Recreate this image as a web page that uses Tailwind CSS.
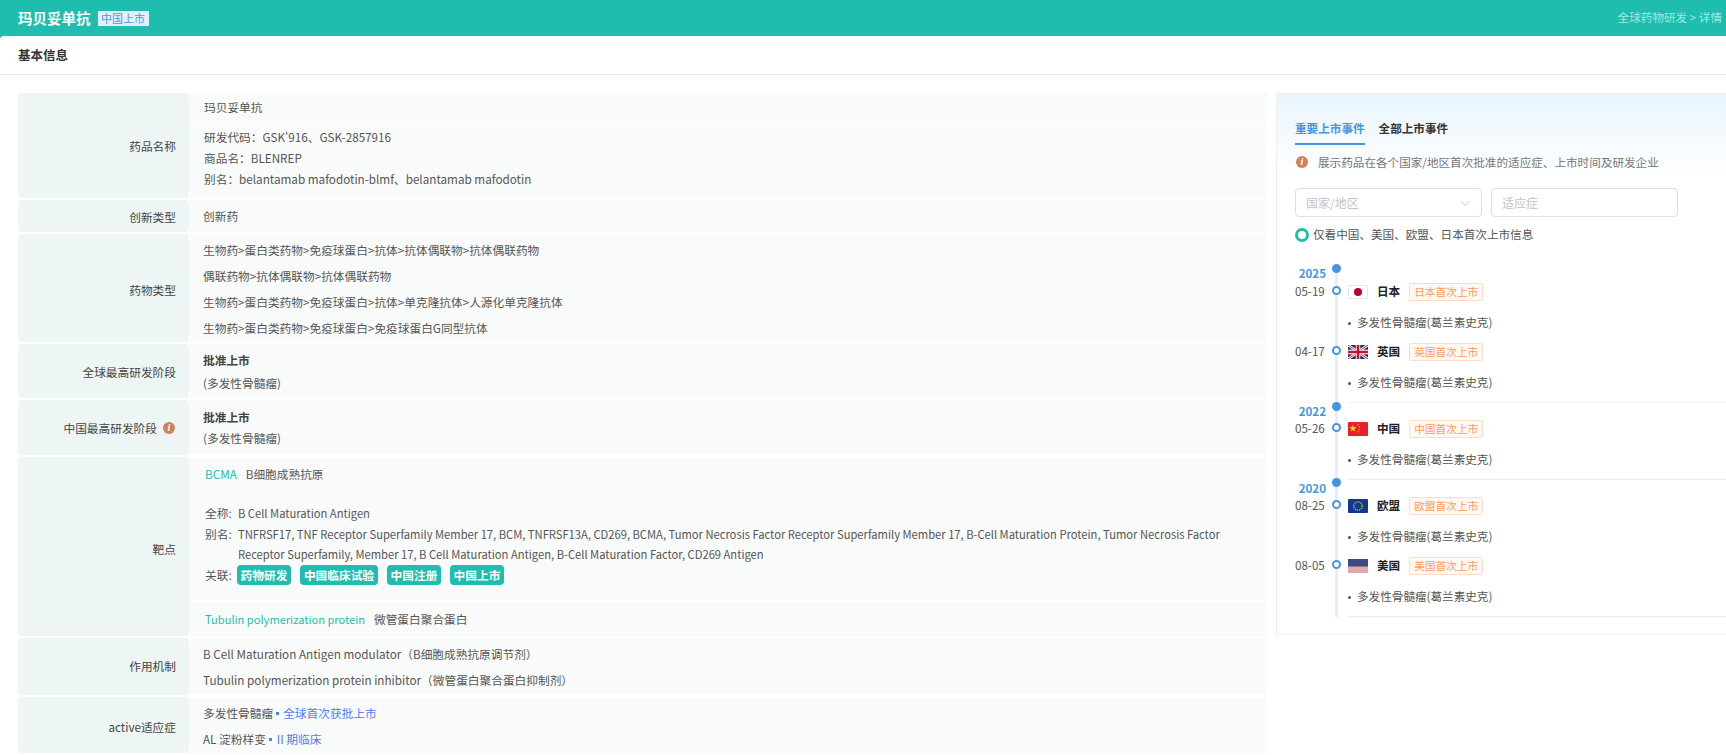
<!DOCTYPE html>
<html lang="zh-CN">
<head>
    <meta charset="UTF-8">
    <title>玛贝妥单抗</title>
    <script src="https://cdn.jsdelivr.net/npm/@tailwindcss/browser@4"></script>
</head>
<body class="h-[755px] overflow-hidden bg-[#1fbdae] font-['Noto_Sans_CJK_SC',sans-serif] text-[11.6px] text-[#555]">
    <!-- Header -->
    <div class="h-9 flex items-center justify-between pl-[18px] pr-1">
        <div class="flex items-center gap-[7px]">
            <span class="text-[14.5px] font-bold text-white">玛贝妥单抗</span>
            <span class="h-[15px] w-[51px] flex items-center justify-center bg-[#e4f0fe] text-[11px] leading-none text-[#4a97ee]">中国上市</span>
        </div>
        <span class="text-[#a3e8e0]">全球药物研发 &gt; 详情</span>
    </div>

    <div class="h-[719px] bg-white rounded-tl-[4px]">
        <div class="h-[39px] flex items-center pl-[18px] border-b border-[#e8e8e8] text-[12.5px] font-bold text-[#333]">基本信息</div>

        <div class="flex items-start pt-[18px] pl-[18px]">
            <!-- Basic info table -->
            <div class="w-[1249px] shrink-0 flex flex-col gap-[2px] text-[11.7px]">
                <div class="flex gap-[1px]">
                    <div class="w-[171px] h-[105px] shrink-0 flex items-center justify-end pr-[13px] pt-[1px] bg-[#eef6f5] rounded text-[#444]">药品名称</div>
                    <div class="flex-1 flex flex-col gap-[1px]">
                        <div class="h-[28px] pl-[14px] bg-[#f9fbfb] leading-[28px]">玛贝妥单抗</div>
                        <div class="h-[76px] pl-[14px] pt-[4px] bg-[#f9fbfb] leading-[21px]">
                            <div>研发代码：GSK'916、GSK-2857916</div>
                            <div>商品名：BLENREP</div>
                            <div>别名：belantamab mafodotin-blmf、belantamab mafodotin</div>
                        </div>
                    </div>
                </div>

                <div class="flex gap-[1px]">
                    <div class="w-[171px] h-[32px] shrink-0 flex items-center justify-end pr-[13px] pt-[1px] bg-[#eef6f5] rounded text-[#444]">创新类型</div>
                    <div class="flex-1 pl-[13px] pt-[3px] bg-[#f9fbfb] leading-[26px]">创新药</div>
                </div>

                <div class="flex gap-[1px]">
                    <div class="w-[171px] h-[108px] shrink-0 flex items-center justify-end pr-[13px] pt-[3px] bg-[#eef6f5] rounded text-[#444]">药物类型</div>
                    <div class="flex-1 pl-[13px] pt-[3px] bg-[#f9fbfb] leading-[26px]">
                        <div>生物药&gt;蛋白类药物&gt;免疫球蛋白&gt;抗体&gt;抗体偶联物&gt;抗体偶联药物</div>
                        <div>偶联药物&gt;抗体偶联物&gt;抗体偶联药物</div>
                        <div>生物药&gt;蛋白类药物&gt;免疫球蛋白&gt;抗体&gt;单克隆抗体&gt;人源化单克隆抗体</div>
                        <div>生物药&gt;蛋白类药物&gt;免疫球蛋白&gt;免疫球蛋白G同型抗体</div>
                    </div>
                </div>

                <div class="flex gap-[1px]">
                    <div class="w-[171px] h-[54px] shrink-0 flex items-center justify-end pr-[13px] pt-[1px] bg-[#eef6f5] rounded text-[#444]">全球最高研发阶段</div>
                    <div class="flex-1 pl-[13px] pt-[5px] bg-[#f9fbfb] leading-[22.500px]">
                        <div class="font-bold text-[#444]">批准上市</div>
                        <div>(多发性骨髓瘤)</div>
                    </div>
                </div>

                <div class="flex gap-[1px]">
                    <div class="w-[171px] h-[55px] shrink-0 flex items-center justify-end gap-[6px] pr-[14px] bg-[#eef6f5] rounded text-[#444]">
                        中国最高研发阶段
                        <span class="w-3 h-3 flex items-center justify-center rounded-full bg-[#cf8257] font-['Liberation_Serif'] text-[10px] font-bold italic leading-none text-white">i</span>
                    </div>
                    <div class="flex-1 pl-[13px] pt-[6px] bg-[#f9fbfb] leading-[21px]">
                        <div class="font-bold text-[#444]">批准上市</div>
                        <div>(多发性骨髓瘤)</div>
                    </div>
                </div>

                <div class="flex gap-[1px]">
                    <div class="w-[171px] h-[179px] shrink-0 flex items-center justify-end pr-[13px] pt-[5px] bg-[#eef6f5] rounded text-[#444]">靶点</div>
                    <div class="flex-1 flex flex-col gap-[1px]">
                        <div class="h-[34px] pl-[15px] pt-[4px] bg-[#f9fbfb] leading-[26px]">
                            <span class="text-[#1fbdae] mr-[9px]">BCMA</span>B细胞成熟抗原
                        </div>
                        <div class="h-[108px] pl-[15px] pt-[11px] bg-[#f9fbfb] leading-[20.500px]">
                            <div class="flex"><span class="w-[33px] shrink-0">全称:</span><span class="text-[11.200px]">B Cell Maturation Antigen</span></div>
                            <div class="flex"><span class="w-[33px] shrink-0">别名:</span><span class="w-[1010px] text-[11.200px]">TNFRSF17, TNF Receptor Superfamily Member 17, BCM, TNFRSF13A, CD269, BCMA, Tumor Necrosis Factor Receptor Superfamily Member 17, B-Cell Maturation Protein, Tumor Necrosis Factor Receptor Superfamily, Member 17, B Cell Maturation Antigen, B-Cell Maturation Factor, CD269 Antigen</span></div>
                            <div class="flex items-center">
                                <span class="w-[32px] shrink-0">关联:</span>
                                <div class="flex gap-[9px] font-bold text-white">
                                    <span class="w-[54px] h-5 flex items-center justify-center rounded bg-[#1fbdae]">药物研发</span>
                                    <span class="w-[78px] h-5 flex items-center justify-center rounded bg-[#1fbdae]">中国临床试验</span>
                                    <span class="w-[54px] h-5 flex items-center justify-center rounded bg-[#1fbdae]">中国注册</span>
                                    <span class="w-[54px] h-5 flex items-center justify-center rounded bg-[#1fbdae]">中国上市</span>
                                </div>
                            </div>
                        </div>
                        <div class="h-[35px] pl-[15px] pt-[5px] bg-[#f9fbfb] leading-[26px]">
                            <span class="text-[11.100px] text-[#1fbdae] mr-[9px]">Tubulin polymerization protein</span>微管蛋白聚合蛋白
                        </div>
                    </div>
                </div>

                <div class="flex gap-[1px]">
                    <div class="w-[171px] h-[57px] shrink-0 flex items-center justify-end pr-[13px] pb-[1px] bg-[#eef6f5] rounded text-[#444]">作用机制</div>
                    <div class="flex-1 pl-[13px] pt-[3px] bg-[#f9fbfb] leading-[26px]">
                        <div>B Cell Maturation Antigen modulator（B细胞成熟抗原调节剂）</div>
                        <div>Tubulin polymerization protein inhibitor（微管蛋白聚合蛋白抑制剂）</div>
                    </div>
                </div>

                <div class="flex gap-[1px]">
                    <div class="w-[171px] h-[56px] shrink-0 flex items-center justify-end pr-[13px] pt-[3px] bg-[#eef6f5] rounded text-[#444]">active适应症</div>
                    <div class="flex-1 pl-[13px] pt-[3px] bg-[#f9fbfb] leading-[26px]">
                        <div class="flex items-center">多发性骨髓瘤<span class="w-[3px] h-[3px] mx-[3px] bg-[#4d7cfe]"></span><span class="text-[#4d7cfe] ml-[1px]">全球首次获批上市</span></div>
                        <div class="flex items-center">AL 淀粉样变<span class="w-[3px] h-[3px] mx-[3px] bg-[#4d7cfe]"></span><span class="text-[#4d7cfe] ml-[2px]">II 期临床</span></div>
                    </div>
                </div>
            </div>

            <!-- Market events panel -->
            <div class="w-[460px] h-[542px] shrink-0 ml-[9px] pl-[18px] pt-[26px] border border-[#eeeeee] bg-gradient-to-b from-[#e9f5fe] to-white to-[16%]">
                <div class="flex gap-[14px] font-bold">
                    <span class="h-[25px] border-b-2 border-[#4596e0] text-[#4596e0]">重要上市事件</span>
                    <span class="text-[#333]">全部上市事件</span>
                </div>
                <div class="flex items-center gap-[10px] mt-[7px] ml-[1px] leading-[20px] text-[#777]">
                    <span class="w-3 h-3 flex items-center justify-center rounded-full bg-[#cf8257] font-['Liberation_Serif'] text-[10px] font-bold italic leading-none text-white">i</span>
                    展示药品在各个国家/地区首次批准的适应症、上市时间及研发企业
                </div>
                <div class="flex gap-[9px] mt-[16px]">
                    <div class="w-[187px] h-[29px] flex items-center justify-between pl-[10px] pr-[10px] bg-white rounded border border-[#dcdfe6] text-xs text-[#c0c4cc]">
                        国家/地区
                        <svg class="w-3 h-3" fill="none" stroke="#c0c4cc" viewBox="0 0 12 12"><path d="M1.5 4l4.5 4.5L10.500 4"></path></svg>
                    </div>
                    <div class="w-[187px] h-[29px] flex items-center pl-[10px] bg-white rounded border border-[#dcdfe6] text-xs text-[#c0c4cc]">适应症</div>
                </div>
                <div class="flex items-center gap-[4px] mt-[11px] h-[14px] text-[#555]">
                    <span class="w-[14px] h-[14px] rounded-full border-[3px] border-[#1fbdae] bg-white"></span>
                    仅看中国、美国、欧盟、日本首次上市信息
                </div>

                <!-- Timeline -->
                <div class="relative mt-[24px]">
                    <div class="absolute left-[40px] top-[3px] bottom-0 w-[3px] bg-[#e4eef9]"></div>

                    <section>
                        <div class="relative h-[17px] w-[31px] text-right font-bold leading-[14px] text-[#4596e0]">2025
                            <span class="absolute left-[37px] top-[-2px] w-[9px] h-[9px] rounded-full bg-[#4596e0]"></span>
                        </div>
                        <div class="flex">
                            <div class="relative w-[53px] shrink-0 leading-[16px]">05-19
                                <span class="absolute left-[37px] top-[3px] w-[9px] h-[9px] rounded-full border-2 border-[#4596e0] bg-white"></span>
                            </div>
                            <div class="flex-1 h-[60px]">
                                <div class="flex items-center h-[18px]">
                                    <svg class="w-5 h-[14px] shrink-0" viewBox="0 0 20 14"><rect x=".5" y=".5" width="19" height="13" rx="1" fill="#fff" stroke="#e4e4e8"></rect><circle cx="10" cy="7" r="4" fill="#bc002d"></circle></svg>
                                    <span class="ml-[9px] font-bold text-[#222]">日本</span>
                                    <span class="ml-[9px] h-[18px] w-[74px] flex items-center justify-center rounded-[2px] border border-[#ffdcc5] bg-[#fff8f3] text-[10.7px] text-[#ff9a5c]">日本首次上市</span>
                                </div>
                                <div class="flex items-center mt-[12px] h-[20px]"><span class="w-[3px] h-[3px] rounded-full bg-[#555] mr-[6px]"></span>多发性骨髓瘤(葛兰素史克)</div>
                            </div>
                        </div>
                        <div class="flex">
                            <div class="relative w-[53px] shrink-0 leading-[16px]">04-17
                                <span class="absolute left-[37px] top-[3px] w-[9px] h-[9px] rounded-full border-2 border-[#4596e0] bg-white"></span>
                            </div>
                            <div class="flex-1 h-[60px] border-b border-[#eeeeee]">
                                <div class="flex items-center h-[18px]">
                                    <svg class="w-5 h-[14px] shrink-0" viewBox="0 0 20 14"><rect width="20" height="14" rx="1" fill="#26306e"></rect><path d="M0 0l20 14M20 0L0 14" stroke="#fff" stroke-width="2.600"></path><path d="M0 0l20 14M20 0L0 14" stroke="#c8102e" stroke-width=".9"></path><path d="M10 0v14M0 7h20" stroke="#fff" stroke-width="4.500"></path><path d="M10 0v14M0 7h20" stroke="#c8102e" stroke-width="2.600"></path></svg>
                                    <span class="ml-[9px] font-bold text-[#222]">英国</span>
                                    <span class="ml-[9px] h-[18px] w-[74px] flex items-center justify-center rounded-[2px] border border-[#ffdcc5] bg-[#fff8f3] text-[10.7px] text-[#ff9a5c]">英国首次上市</span>
                                </div>
                                <div class="flex items-center mt-[12px] h-[20px]"><span class="w-[3px] h-[3px] rounded-full bg-[#555] mr-[6px]"></span>多发性骨髓瘤(葛兰素史克)</div>
                            </div>
                        </div>
                    </section>

                    <section>
                        <div class="relative h-[17px] w-[31px] text-right font-bold leading-[16px] text-[#4596e0]">2022
                            <span class="absolute left-[37px] top-[-1px] w-[9px] h-[9px] rounded-full bg-[#4596e0]"></span>
                        </div>
                        <div class="flex">
                            <div class="relative w-[53px] shrink-0 leading-[16px]">05-26
                                <span class="absolute left-[37px] top-[3px] w-[9px] h-[9px] rounded-full border-2 border-[#4596e0] bg-white"></span>
                            </div>
                            <div class="flex-1 h-[60px] border-b border-[#eeeeee]">
                                <div class="flex items-center h-[18px]">
                                    <svg class="w-5 h-[14px] shrink-0" viewBox="0 0 20 14"><rect width="20" height="14" rx="1" fill="#e5202a"></rect><path d="M5 2.500l.9 2.700h2.800l-2.300 1.700.9 2.700L5 8l-2.300 1.600.9-2.700-2.300-1.700h2.800z" fill="#ffde00"></path><circle cx="10" cy="2.500" r=".7" fill="#ffde00"></circle><circle cx="11.500" cy="4.800" r=".7" fill="#ffde00"></circle><circle cx="11.500" cy="7.500" r=".7" fill="#ffde00"></circle><circle cx="10" cy="9.800" r=".7" fill="#ffde00"></circle></svg>
                                    <span class="ml-[9px] font-bold text-[#222]">中国</span>
                                    <span class="ml-[9px] h-[18px] w-[74px] flex items-center justify-center rounded-[2px] border border-[#ffdcc5] bg-[#fff8f3] text-[10.7px] text-[#ff9a5c]">中国首次上市</span>
                                </div>
                                <div class="flex items-center mt-[12px] h-[20px]"><span class="w-[3px] h-[3px] rounded-full bg-[#555] mr-[6px]"></span>多发性骨髓瘤(葛兰素史克)</div>
                            </div>
                        </div>
                    </section>

                    <section>
                        <div class="relative h-[17px] w-[31px] text-right font-bold leading-[16px] text-[#4596e0]">2020
                            <span class="absolute left-[37px] top-[-2px] w-[9px] h-[9px] rounded-full bg-[#4596e0]"></span>
                        </div>
                        <div class="flex">
                            <div class="relative w-[53px] shrink-0 leading-[16px]">08-25
                                <span class="absolute left-[37px] top-[3px] w-[9px] h-[9px] rounded-full border-2 border-[#4596e0] bg-white"></span>
                            </div>
                            <div class="flex-1 h-[60px]">
                                <div class="flex items-center h-[18px]">
                                    <svg class="w-5 h-[14px] shrink-0" viewBox="0 0 20 14"><rect width="20" height="14" rx="1" fill="#0f3a94"></rect><circle cx="10" cy="7" r="4.200" fill="none" stroke="#ffcc00" stroke-width="1.300" stroke-dasharray="1.100 1.100"></circle></svg>
                                    <span class="ml-[9px] font-bold text-[#222]">欧盟</span>
                                    <span class="ml-[9px] h-[18px] w-[74px] flex items-center justify-center rounded-[2px] border border-[#ffdcc5] bg-[#fff8f3] text-[10.7px] text-[#ff9a5c]">欧盟首次上市</span>
                                </div>
                                <div class="flex items-center mt-[12px] h-[20px]"><span class="w-[3px] h-[3px] rounded-full bg-[#555] mr-[6px]"></span>多发性骨髓瘤(葛兰素史克)</div>
                            </div>
                        </div>
                        <div class="flex">
                            <div class="relative w-[53px] shrink-0 leading-[16px]">08-05
                                <span class="absolute left-[37px] top-[3px] w-[9px] h-[9px] rounded-full border-2 border-[#4596e0] bg-white"></span>
                            </div>
                            <div class="flex-1 h-[60px] border-b border-[#eeeeee]">
                                <div class="flex items-center h-[18px]">
                                    <svg class="w-5 h-[14px] shrink-0" viewBox="0 0 20 14"><rect width="20" height="14" rx="1" fill="#fff"></rect><path d="M0 1h20M0 3h20M0 5h20M0 7h20M0 9h20M0 11h20M0 13h20" stroke="#c0504d" stroke-width="1"></path><rect width="20" height="7.500" fill="#3f4a80"></rect></svg>
                                    <span class="ml-[9px] font-bold text-[#222]">美国</span>
                                    <span class="ml-[9px] h-[18px] w-[74px] flex items-center justify-center rounded-[2px] border border-[#ffdcc5] bg-[#fff8f3] text-[10.7px] text-[#ff9a5c]">美国首次上市</span>
                                </div>
                                <div class="flex items-center mt-[12px] h-[20px]"><span class="w-[3px] h-[3px] rounded-full bg-[#555] mr-[6px]"></span>多发性骨髓瘤(葛兰素史克)</div>
                            </div>
                        </div>
                    </section>
                </div>
            </div>
        </div>
    </div>
</body>
</html>
